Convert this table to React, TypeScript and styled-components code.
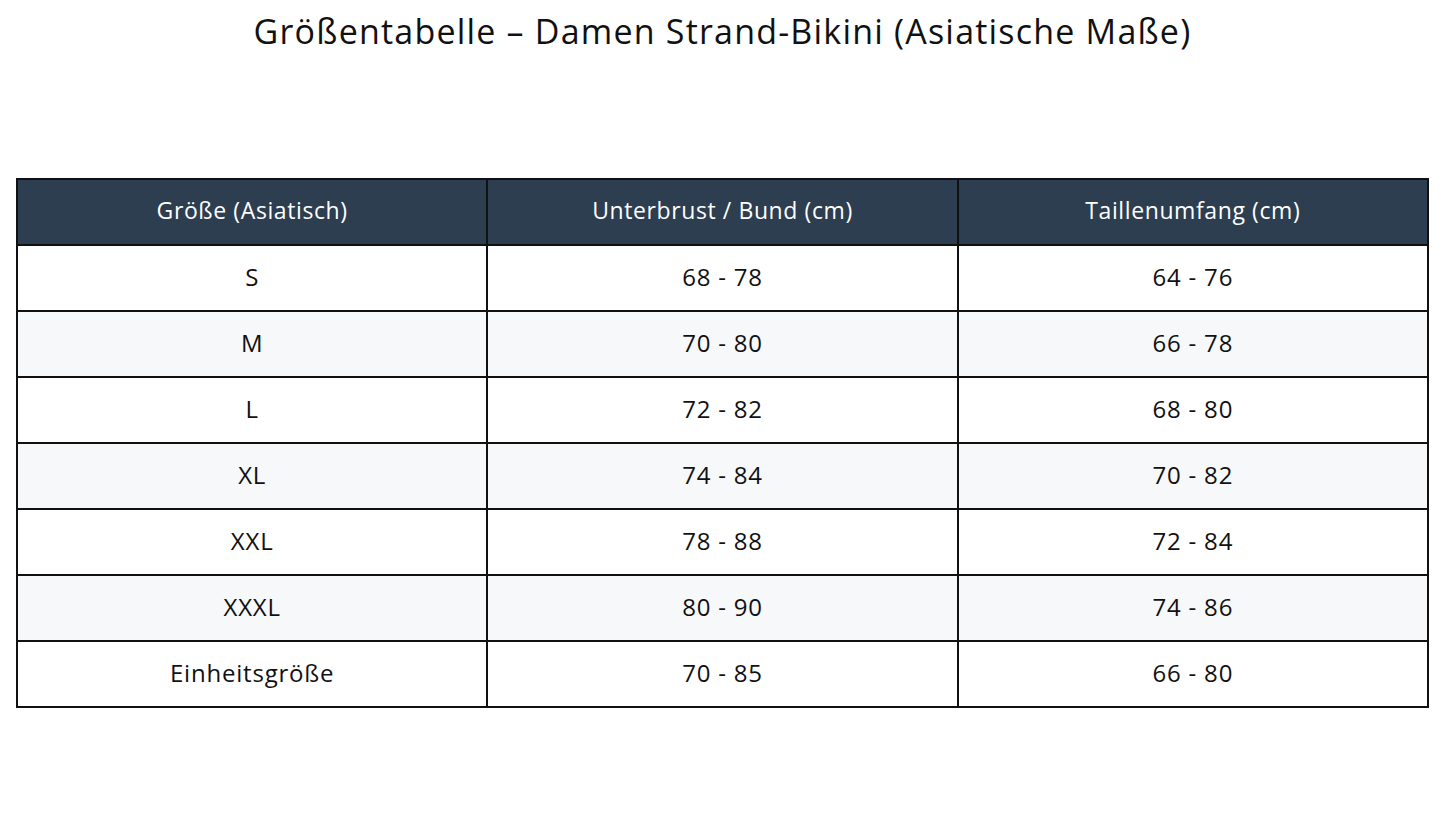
import React from "react";
import styled, { createGlobalStyle } from "styled-components";

const Global = createGlobalStyle`
  html, body { margin: 0; padding: 0; background: #ffffff; }
  body { font-family: "Open Sans", "Lato", sans-serif; color: #111; }
`;

const Page = styled.div`
  width: 1445px;
  height: 825px;
  box-sizing: border-box;
  padding: 10px 16px 0 16px;
  display: flex;
  flex-direction: column;
  align-items: stretch;
`;

const Title = styled.h1`
  margin: 0;
  font-size: 34px;
  letter-spacing: 1.2px;
  font-weight: 400;
  line-height: 42px;
  text-align: center;
  color: #111;
`;

const Table = styled.table`
  margin-top: 126px;
  width: 1413px;
  border-collapse: collapse;
  table-layout: fixed;
  border: 2px solid #111;
`;

const HeadCell = styled.th`
  height: 60px;
  padding: 0 0 4px 0;
  background: #2c3e50;
  color: #ffffff;
  font-weight: 400;
  font-size: 23px;
  letter-spacing: 0.6px;
  text-align: center;
  border: 2px solid #111;
`;

const Row = styled.tr<{ $alt: boolean }>`
  background: ${(p) => (p.$alt ? "#f7f8fa" : "#ffffff")};
`;

const Cell = styled.td`
  height: 60px;
  padding: 0 0 4px 0;
  font-size: 24px;
  letter-spacing: 0.8px;
  text-align: center;
  border: 2px solid #111;
  color: #111;
`;

const rows: [string, string, string][] = [
  ["S", "68 - 78", "64 - 76"],
  ["M", "70 - 80", "66 - 78"],
  ["L", "72 - 82", "68 - 80"],
  ["XL", "74 - 84", "70 - 82"],
  ["XXL", "78 - 88", "72 - 84"],
  ["XXXL", "80 - 90", "74 - 86"],
  ["Einheitsgröße", "70 - 85", "66 - 80"],
];

export default function App() {
  return (
    <>
      <Global />
      <Page>
        <Title>Größentabelle – Damen Strand-Bikini (Asiatische Maße)</Title>
        <Table>
          <thead>
            <tr>
              <HeadCell>Größe (Asiatisch)</HeadCell>
              <HeadCell>Unterbrust / Bund (cm)</HeadCell>
              <HeadCell>Taillenumfang (cm)</HeadCell>
            </tr>
          </thead>
          <tbody>
            {rows.map((r, i) => (
              <Row key={r[0]} $alt={i % 2 === 1}>
                <Cell>{r[0]}</Cell>
                <Cell>{r[1]}</Cell>
                <Cell>{r[2]}</Cell>
              </Row>
            ))}
          </tbody>
        </Table>
      </Page>
    </>
  );
}
